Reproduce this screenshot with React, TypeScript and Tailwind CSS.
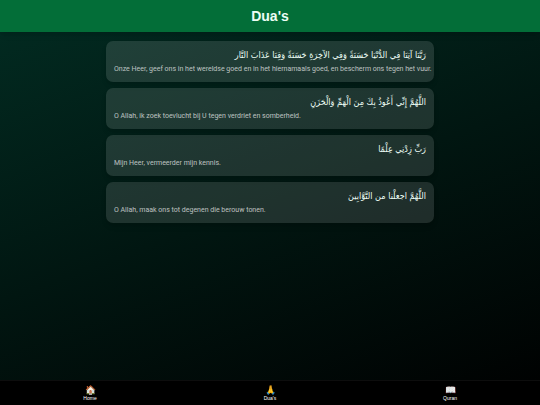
const duas = [
  {
    arabic: 'رَبَّنَا آتِنَا فِي الدُّنْيَا حَسَنَةً وَفِي الآخِرَةِ حَسَنَةً وَقِنَا عَذَابَ النَّار',
    translation: 'Onze Heer, geef ons in het wereldse goed en in het hiernamaals goed, en bescherm ons tegen het vuur.'
  },
  {
    arabic: 'اللَّهُمَّ إِنِّي أَعُوذُ بِكَ مِنَ الْهَمِّ وَالْحَزَنِ',
    translation: 'O Allah, ik zoek toevlucht bij U tegen verdriet en somberheid.'
  },
  {
    arabic: 'رَبِّ زِدْنِي عِلْمًا',
    translation: 'Mijn Heer, vermeerder mijn kennis.'
  },
  {
    arabic: 'اللَّهُمَّ اجعلْنا من التَّوَّابِينَ',
    translation: 'O Allah, maak ons tot degenen die berouw tonen.'
  }
]

const links = [
  { icon: '🏠', label: 'Home', href: '#home' },
  { icon: '🙏', label: "Dua's", href: '#duas' },
  { icon: '📖', label: 'Quran', href: '#quran' }
]

export default function App() {
  return (
    <div className="flex min-h-screen flex-col bg-[linear-gradient(160deg,#022c22,#000)] font-['Liberation_Sans','DejaVu_Sans',sans-serif] text-white">
      <header className="bg-[#036e38] py-1 text-center shadow-md">
        <h1 className="text-[14px] leading-6 font-bold text-[#ecfdf5]">Dua's</h1>
      </header>

      <main className="mx-auto flex w-full max-w-[344px] grow flex-col gap-[6px] px-2 py-[9px]">
        {duas.map((dua) => (
          <article key={dua.translation} className="rounded-[7px] bg-white/12 px-2 pt-[6px] pb-[7px] shadow-md">
            <p dir="rtl" lang="ar" className="font-['DejaVu_Sans_Condensed','DejaVu_Sans',sans-serif] text-[9px] leading-4 text-[#ecfdf5]">
              {dua.arabic}
            </p>
            <p className="font-['Roboto','Liberation_Sans',sans-serif] text-[7px] leading-3 whitespace-nowrap text-white/70">
              {dua.translation}
            </p>
          </article>
        ))}
      </main>

      <nav className="grid grid-cols-3 border-t border-white/5 bg-black py-1">
        {links.map((link) => (
          <a key={link.label} href={link.href} className="flex flex-col items-center text-white">
            <span className="text-[9px] leading-[10px]">{link.icon}</span>
            <span className="text-[5px] leading-[6px]">{link.label}</span>
          </a>
        ))}
      </nav>
    </div>
  )
}
